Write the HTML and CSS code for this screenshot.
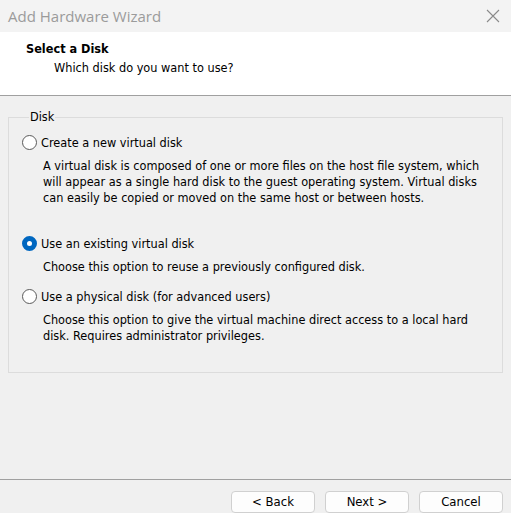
FILE: index.html
```html
<!DOCTYPE html>
<html>
<head>
<meta charset="utf-8">
<link rel="stylesheet" href="styles.css">
</head>
<body>
<div class="window">
  <div class="titlebar">
    <span class="title">Add Hardware Wizard</span>
    <svg class="close" width="14" height="14" viewBox="0 0 14 14"><path d="M1 1 L13 13 M13 1 L1 13" stroke="#8a8a8a" stroke-width="1.1" fill="none"/></svg>
  </div>
  <div class="header">
    <div class="h-title">Select a Disk</div>
    <div class="h-sub">Which disk do you want to use?</div>
  </div>
  <div class="body">
    <fieldset class="group">
      <legend>Disk</legend>
      <div class="option">
        <div class="radio-row"><span class="radio"></span><span class="label">Create a new virtual disk</span></div>
        <p class="desc">A virtual disk is composed of one or more files on the host file system, which will appear as a single hard disk to the guest operating system. Virtual disks can easily be copied or moved on the same host or between hosts.</p>
      </div>
      <div class="option opt2">
        <div class="radio-row"><span class="radio checked"></span><span class="label">Use an existing virtual disk</span></div>
        <p class="desc">Choose this option to reuse a previously configured disk.</p>
      </div>
      <div class="option opt3">
        <div class="radio-row"><span class="radio"></span><span class="label">Use a physical disk (for advanced users)</span></div>
        <p class="desc">Choose this option to give the virtual machine direct access to a local hard disk. Requires administrator privileges.</p>
      </div>
    </fieldset>
  </div>
  <div class="footer">
    <button class="btn">&lt; Back</button>
    <button class="btn">Next &gt;</button>
    <button class="btn">Cancel</button>
  </div>
</div>
</body>
</html>
```
FILE: styles.css
```css
html, body { margin: 0; padding: 0; }
body { width: 511px; height: 513px; overflow: hidden; background: #f0f0f0; font-family: "DejaVu Sans Condensed", "DejaVu Sans", sans-serif; font-size: 12.6px; color: #000; }
.window { display: flex; flex-direction: column; height: 513px; }
.titlebar { height: 32px; background: #f3f3f3; display: flex; align-items: center; justify-content: space-between; padding: 0 11px 0 8px; }
.title { font-family: "Open Sans", "Liberation Sans", sans-serif; font-size: 15px; color: #9b9b9b; }
.close { display: block; }
.header { background: #fff; border-bottom: 1px solid #a0a0a0; padding: 8px 0 0 26px; box-sizing: border-box; height: 64px; }
.h-title { font-weight: bold; line-height: 16px; margin-top: 1px; }
.h-sub { margin-left: 28px; line-height: 16px; margin-top: 3px; }
.body { flex: 1; padding: 14px 8px 0 8px; }
.group { margin: 0; border: 1px solid #dcdcdc; padding: 10px 0 0 13px; height: 263px; box-sizing: border-box; }
.group legend { padding: 0 1px; margin-left: 7px; line-height: 14px; }
.radio-row { display: flex; align-items: center; height: 16px; }
.radio { width: 15px; height: 15px; border: 1px solid #5a5a5a; border-radius: 50%; box-sizing: border-box; margin-right: 4px; background: #fff; flex: none; }
.radio.checked { border: 5px solid #0067c0; background: #fff; }
.desc { margin: 8px 0 0 21px; line-height: 16px; width: 452px; }
.opt2 { margin-top: 29px; }
.opt3 { margin-top: 13px; }
.footer { height: 34px; border-top: 1px solid #a0a0a0; display: flex; justify-content: flex-end; gap: 10px; padding: 11px 8px 0 0; box-sizing: border-box; }
.btn { width: 84px; height: 22px; font: inherit; font-size: 13px; line-height: 18px; background: #fdfdfd; border: 1px solid #d0d0d0; border-radius: 4px; padding: 0 0 1px; color: #000; }
```
